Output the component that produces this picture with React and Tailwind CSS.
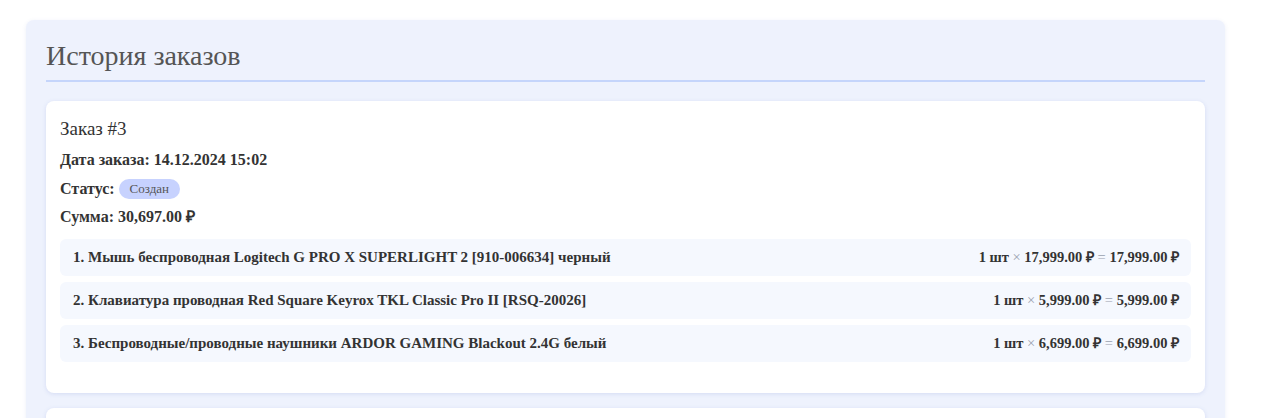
import React from 'react'

const order = {
  id: 3,
  date: '14.12.2024 15:02',
  status: 'Создан',
  total: '30,697.00 ₽',
  items: [
    { name: 'Мышь беспроводная Logitech G PRO X SUPERLIGHT 2 [910-006634] черный', qty: 1, price: '17,999.00 ₽', sum: '17,999.00 ₽' },
    { name: 'Клавиатура проводная Red Square Keyrox TKL Classic Pro II [RSQ-20026]', qty: 1, price: '5,999.00 ₽', sum: '5,999.00 ₽' },
    { name: 'Беспроводные/проводные наушники ARDOR GAMING Blackout 2.4G белый', qty: 1, price: '6,699.00 ₽', sum: '6,699.00 ₽' },
  ],
}

function OrderCard({ order }) {
  return (
    <div className="bg-white rounded-lg shadow-[0_1px_4px_rgba(100,120,200,0.18)] px-[14px] pt-4 pb-[31px] mb-[15px]">
      <h3 className="text-[19px] leading-6 text-[#333]">Заказ #{order.id}</h3>
      <p className="mt-[9px] text-[16px] leading-5 font-bold text-[#333]">Дата заказа: {order.date}</p>
      <div className="mt-[9px] flex items-center gap-1 text-[16px] leading-5 font-bold text-[#333]">
        <span>Статус:</span>
        <span className="bg-[#c7d2fe] rounded-full px-[11px] py-[2px] text-[13px] leading-4 font-normal text-[#555]">{order.status}</span>
      </div>
      <p className="mt-[8px] text-[16px] leading-5 font-bold text-[#333]">Сумма: {order.total}</p>

      <div className="mt-3 flex flex-col gap-[6px]">
        {order.items.map((item, i) => (
          <div key={i} className="flex items-center justify-between bg-[#f5f8fe] rounded-md pl-[13px] pr-3 h-[37px] text-[15px] font-bold text-[#333]">
            <span>{i + 1}. {item.name}</span>
            <span className="text-[14.5px]">
              {item.qty} шт <span className="font-normal text-gray-400">×</span> {item.price} <span className="font-normal text-gray-400">=</span> {item.sum}
            </span>
          </div>
        ))}
      </div>
    </div>
  )
}

export default function App() {
  return (
    <div className="min-h-screen bg-white pt-5 pl-[26px] pr-[55px]" style={{ fontFamily: '"Liberation Serif", serif' }}>
      <div className="bg-[#eef2fd] rounded-lg shadow-[0_1px_4px_rgba(100,120,200,0.12)] px-5 pt-5 pb-5">
        <h2 className="text-[28px] leading-8 text-[#555] pb-2 border-b-2 border-[#c5d5fb]">История заказов</h2>
        <div className="mt-[19px]">
          <OrderCard order={order} />
          <div className="bg-white rounded-lg shadow-[0_1px_4px_rgba(100,120,200,0.18)] h-[120px]" />
        </div>
      </div>
    </div>
  )
}
